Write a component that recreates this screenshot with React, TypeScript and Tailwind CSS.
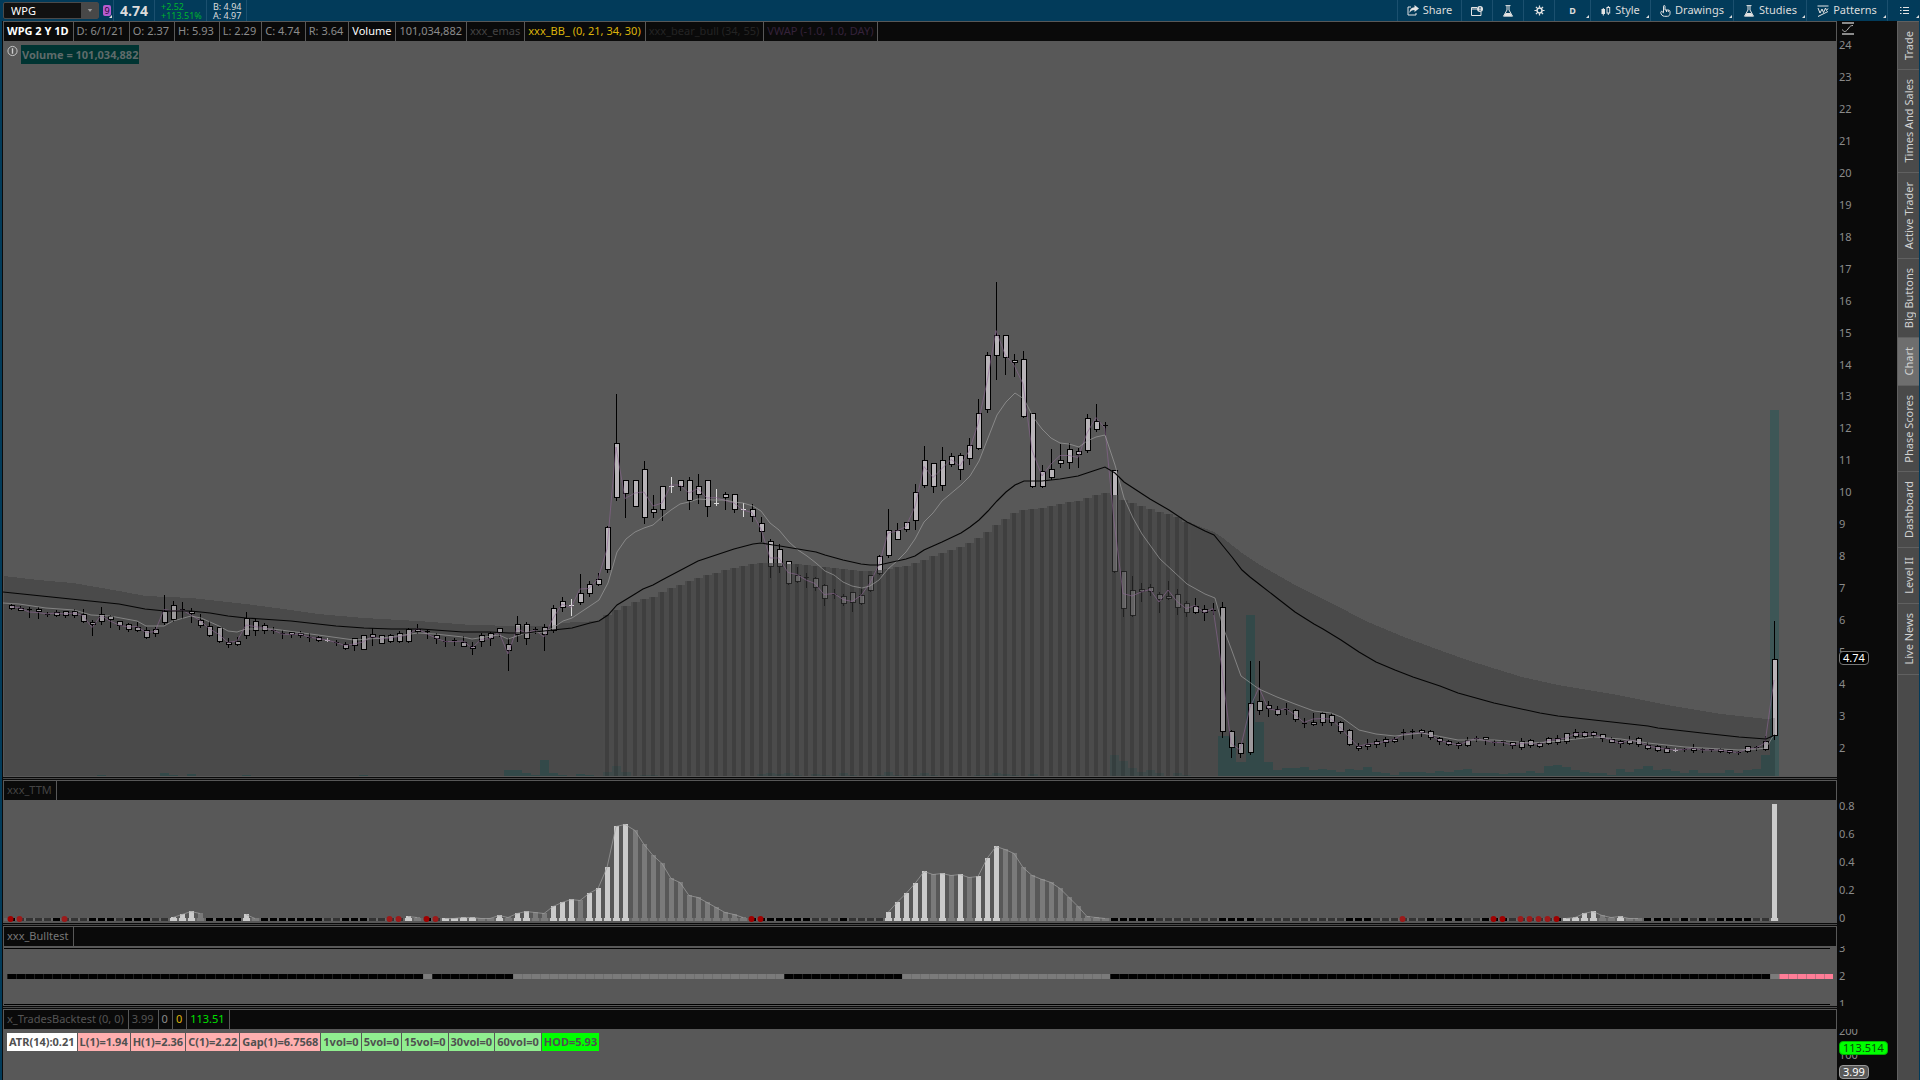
import type { ReactNode } from "react";

// one bar every 9.044px, first bar at x = 11
const barX = (i: number) => 11 + i * 9.044;
const barPx = (i: number) => Math.round(barX(i) - 0.5);
const barLeft = (i: number) => Math.round(barX(i) - 4.5);

// [body top, body bottom, high, low]
const candles: number[][] = [
    [605,608,604,609],[608,610,606,610],[609,610,607,617],[609,611,607,618],[614,615,612,616],[612,615,610,616],
    [611,615,611,617],[611,615,609,617],[614,621,609,622],[622,624,620,635],[614,621,607,624],[616,619,615,627],
    [621,625,621,629],[624,629,623,631],[627,630,622,631],[630,637,627,638],[629,633,627,636],[611,622,595,624],
    [605,619,601,621],[609,610,602,618],[611,613,608,622],[620,625,614,627],[626,635,621,636],[627,641,627,642],
    [642,644,638,647],[641,644,637,645],[618,635,612,638],[621,630,618,635],[625,630,623,633],[630,631,627,633],
    [633,634,630,638],[632,634,632,637],[633,635,631,637],[637,638,633,641],[637,640,636,641],[640,640,638,642],
    [642,643,640,645],[644,648,642,649],[638,645,638,650],[635,649,635,649],[634,637,628,645],[635,643,635,643],
    [635,641,634,642],[633,641,631,642],[629,641,628,642],[629,631,624,633],[631,632,630,638],[635,638,633,643],
    [641,642,637,646],[640,641,638,645],[642,646,636,646],[646,648,642,654],[635,641,633,646],[633,638,632,645],
    [628,632,628,636],[644,650,638,670],[624,634,616,641],[624,638,622,644],[629,630,627,633],[627,634,624,650],
    [608,630,605,632],[601,607,597,611],[605,605,599,616],[593,602,574,604],[584,593,581,596],[579,584,573,585],
    [527,569,526,572],[443,497,394,500],[480,493,480,517],[480,506,480,506],[469,517,461,523],[509,512,495,517],
    [486,509,486,520],[486,486,477,493],[480,486,480,490],[480,500,477,509],[486,494,474,503],[480,506,480,516],
    [503,503,489,506],[494,497,492,509],[494,509,494,512],[509,509,503,517],[509,516,504,521],[523,531,517,541],
    [541,566,539,577],[549,566,544,572],[561,583,561,584],[575,581,567,582],[577,578,573,587],[578,587,577,590],
    [585,598,584,605],[594,595,589,598],[596,603,594,605],[592,602,592,611],[595,603,587,604],[575,590,575,591],
    [556,573,555,574],[530,555,509,557],[530,539,523,539],[522,529,522,531],[492,520,484,529],[460,485,446,487],
    [463,486,463,492],[460,485,447,490],[456,464,453,466],[455,469,453,479],[445,458,438,464],[413,448,399,449],
    [355,409,352,412],[335,355,282,379],[335,357,335,374],[360,362,354,376],[359,416,351,417],[413,486,413,487],
    [471,486,465,487],[469,477,449,479],[460,463,444,467],[449,462,443,468],[451,454,448,467],[418,450,414,452],
    [421,429,404,431],[425,426,422,435],[470,571,470,572],[571,608,571,616],[590,615,576,616],[589,591,583,601],
    [587,591,584,595],[594,599,592,612],[596,598,581,599],[594,607,589,614],[603,612,601,616],[606,612,598,613],
    [609,612,605,620],[610,611,603,614],[607,731,602,737],[731,747,730,757],[743,753,743,757],[703,752,661,754],
    [701,710,661,714],[705,708,701,716],[709,714,706,715],[709,710,703,714],[710,719,709,721],[723,724,718,727],
    [722,724,713,725],[713,722,712,725],[715,722,713,725],[722,731,721,733],[730,744,729,745],[746,748,743,750],
    [744,746,739,749],[741,744,739,747],[739,742,737,746],[739,741,737,742],[732,733,729,739],[731,732,729,738],
    [730,732,729,736],[731,737,730,739],[738,741,737,744],[741,744,740,745],[743,745,742,748],[740,745,737,746],
    [738,739,736,741],[737,739,737,744],[742,743,740,745],[741,742,740,745],[742,745,742,748],[741,747,738,749],
    [740,745,739,747],[743,746,742,747],[738,743,737,744],[738,742,735,744],[733,741,733,743],[732,736,729,738],
    [732,736,731,737],[732,735,731,737],[734,738,734,741],[739,742,737,742],[741,743,740,747],[740,743,736,744],
    [738,744,737,746],[745,748,742,749],[746,750,745,751],[748,752,746,752],[750,750,748,752],[749,750,748,751],
    [748,750,744,752],[749,750,748,752],[749,750,749,751],[749,751,748,752],[750,752,750,753],[752,753,751,754],
    [746,751,746,752],[747,748,746,750],[741,749,736,750],[659,735,621,739],
];

const slowLine = "3,592 119,604 145,609 165,611 191,611 210,613 228,616 246,618 291,621 336,626 364,628 391,629 421,629 463,632 490,632 509,633 526,633 553,630 572,628 590,623 599,621 608,615 617,605 635,594 643,589 653,585 662,580 698,561 734,549 753,544 761,543 773,545 780,546 798,549 816,552 825,555 843,560 861,564 870,565 879,565 906,559 915,556 924,550 942,542 961,533 970,527 979,520 988,511 997,501 1006,492 1015,485 1024,481 1042,481 1060,479 1078,476 1093,471 1105,467 1115,473 1124,482 1150,499 1169,510 1187,522 1205,531 1214,535 1223,546 1232,557 1242,570 1250,577 1259,584 1277,598 1295,612 1314,624 1323,629 1341,640 1359,652 1376,662 1395,670 1413,677 1440,686 1458,693 1494,703 1540,713 1558,716 1648,726 1658,728 1702,733 1739,737 1766,739 1775,735";

const fastLine = "3,603 19,604 46,608 74,610 91,615 110,616 137,621 146,626 164,626 173,621 191,616 201,618 219,626 228,631 237,632 246,629 273,629 318,635 354,640 382,638 418,633 435,634 463,637 472,639 499,635 508,639 526,633 544,632 553,628 563,621 572,618 590,606 599,600 608,583 617,552 626,539 635,532 644,528 653,525 662,517 671,510 680,504 689,502 698,499 713,500 725,500 734,502 743,503 753,506 761,511 770,523 779,530 789,542 798,550 807,556 816,563 825,571 834,575 843,582 852,586 862,588 870,586 879,580 888,569 897,561 906,552 915,539 924,522 933,513 942,501 961,485 970,476 979,461 988,438 997,415 1006,402 1015,393 1024,399 1033,417 1042,429 1051,438 1060,443 1069,444 1079,447 1087,441 1096,437 1105,435 1115,465 1124,498 1133,518 1142,534 1160,559 1187,584 1205,594 1215,598 1223,627 1232,651 1241,676 1259,689 1277,697 1295,704 1314,711 1331,713 1341,717 1359,730 1376,734 1395,736 1422,733 1458,740 1494,740 1531,743 1549,742 1576,739 1594,737 1621,739 1648,743 1685,747 1739,750 1757,749 1766,748 1775,733";

const cloudPoints = [
    [3,576],[38,580],[73,583],[119,591],[146,596],[191,598],[246,604],[291,610],[318,614],[364,618],[418,621],[472,625],
    [517,626],[551,626],[560,623],[599,621],[608,615],[617,610],[626,606],[635,602],[653,597],[671,588],[698,578],
    [725,570],[743,566],[761,563],[780,563],[807,565],[834,568],[852,570],[870,571],[888,569],[906,566],[915,563],
    [924,560],[942,553],[961,547],[979,538],[988,532],[997,525],[1006,519],[1015,513],[1024,510],[1042,508],[1060,504],
    [1078,501],[1096,495],[1106,493],[1115,495],[1124,500],[1151,509],[1178,517],[1187,522],[1214,532],[1223,538],
    [1242,553],[1260,565],[1295,585],[1331,603],[1368,622],[1404,637],[1431,647],[1467,660],[1522,677],[1558,685],
    [1612,694],[1667,705],[1721,714],[1766,719],[1775,718],
];

const cloudY = (x: number) => {
    for (let k = 1; k < cloudPoints.length; k++) {
        const [x0, y0] = cloudPoints[k - 1];
        const [x1, y1] = cloudPoints[k];
        if (x <= x1) return Math.round(y0 + ((y1 - y0) * (x - x0)) / (x1 - x0));
    }
    return cloudPoints[cloudPoints.length - 1][1];
};

const cloudArea = (from: number, to: number) => {
    const inner = cloudPoints.filter(([x]) => x > from && x < to).map((p) => p.join(","));
    return [`${from},776`, `${from},${cloudY(from)}`, ...inner, `${to},${cloudY(to)}`, `${to},776`].join(" ");
};

// the cloud is striped between these two bars
const stripeFrom = 66;
const stripeTo = 130;
const stripes = Array.from({ length: stripeTo - stripeFrom + 1 }, (_, k) => k + stripeFrom);

// bar index -> top of the volume bar
const volumes: Record<number, number> = {
    10: 775, 17: 773, 18: 775, 20: 774, 26: 775, 39: 775, 55: 770, 56: 770, 57: 773, 58: 775, 59: 760, 60: 773, 61: 775,
    63: 774, 64: 775, 66: 772, 67: 766, 68: 772, 70: 775, 71: 775, 83: 774, 84: 773, 85: 774, 86: 773, 87: 775, 89: 774,
    90: 775, 92: 773, 93: 775, 96: 775, 97: 772, 98: 775, 100: 775, 101: 773, 102: 775, 107: 775, 108: 775, 109: 773,
    110: 774, 111: 775, 113: 774, 122: 755, 123: 761, 124: 768, 125: 772, 126: 770, 127: 773, 129: 773, 130: 775,
    134: 736, 135: 736, 136: 762, 137: 615, 138: 722, 139: 762, 140: 770, 141: 768, 142: 768, 143: 767, 144: 770,
    145: 769, 146: 770, 147: 772, 148: 769, 149: 770, 150: 767, 151: 772, 152: 773, 153: 775, 154: 772, 155: 772,
    156: 772, 157: 773, 158: 771, 159: 772, 160: 770, 161: 769, 162: 773, 163: 773, 164: 773, 165: 774, 166: 773,
    167: 773, 168: 771, 169: 773, 170: 766, 171: 765, 172: 767, 173: 770, 174: 772, 175: 773, 176: 773, 177: 775,
    178: 769, 179: 772, 180: 769, 181: 766, 182: 770, 183: 769, 184: 771, 185: 773, 186: 770, 187: 773, 188: 773,
    189: 773, 190: 770, 191: 773, 192: 770, 193: 769, 194: 755, 195: 410,
};

// K black dash, G gray dash, R/r red dot on black/gray, W rising bar, H falling bar
const ttmMarks =
    "RrGGGKrGGKKKGKKKGG" + "WWWH" + "KKKK" + "WH" + "KKKKKKKGGKKKGGrrWHRr" + "WWWWHHWHWWHHWWWHWWWWW" +
    "HHHHHHHHHHHHH" + "RRKKKKKGGGKGGGG" + "WWWWWHWHWHWWW" + "HHHHHHHHHHHH" + "KKKKKGGGGGGG" + "KKKKGGGGGGGGGG" +
    "KKKGGGrGGKGKKGGKRRGrrrrR" + "WWWWHHWHH" + "KKKGKGKGKKKKGG" + "W";

const ttmTops: Record<number, number> = {
    18: 917, 19: 914, 20: 911, 21: 913, 26: 914, 27: 918, 44: 916, 45: 917, 48: 918, 49: 918, 50: 917, 51: 917, 52: 918,
    53: 918, 54: 915, 55: 917, 56: 913, 57: 911, 58: 912, 59: 913, 60: 906, 61: 902, 62: 899, 63: 900, 64: 893, 65: 888,
    66: 867, 67: 826, 68: 824, 69: 830, 70: 844, 71: 855, 72: 863, 73: 878, 74: 882, 75: 895, 76: 897, 77: 902, 78: 907,
    79: 912, 80: 914, 81: 917, 97: 912, 98: 902, 99: 893, 100: 883, 101: 871, 102: 874, 103: 873, 104: 875, 105: 874,
    106: 877, 107: 876, 108: 858, 109: 846, 110: 849, 111: 853, 112: 867, 113: 875, 114: 879, 115: 882, 116: 888,
    117: 897, 118: 906, 119: 916, 120: 917, 121: 918, 172: 918, 173: 917, 174: 913, 175: 911, 176: 915, 177: 917,
    178: 916, 179: 918, 180: 918, 195: 804,
};

const ttmRuns = [[18, 21], [26, 27], [44, 45], [48, 81], [97, 121], [172, 180]];

const markColors: Record<string, string> = { K: "#000", G: "#333", R: "#000", r: "#333", W: "#cbcbcb", H: "#7a7a7a" };

const PriceChart = () => {
    const body = candles.map(([top, bottom, high, low], i) => {
        const p = barPx(i);
        if (top === bottom) {
            return <path key={i} d={`M${p + 0.5} ${high}V${low}M${p - 2} ${top + 0.5}h5`} stroke="#d8d8d8" />;
        }
        return (
            <g key={i} stroke="#000">
                <path d={`M${p + 0.5} ${high}V${low + 1}`} />
                {bottom - top < 2
                    ? <rect x={p - 2} y={top} width="5" height="1" fill="#000" stroke="none" />
                    : <rect x={p - 1.5} y={top + 0.5} width="5" height={bottom - top} fill="#b8b4b8" />}
            </g>
        );
    });
    const midLine = candles.map(([, , high, low], i) => `${barPx(i)},${(high + low) / 2}`).join(" ");

    return (
        <svg viewBox="3 41 1834 736" preserveAspectRatio="none" className="block h-full w-full">
            <g shapeRendering="crispEdges">
                {Object.entries(volumes).map(([i, top]) => (
                    <rect key={i} x={barLeft(+i)} y={top} width={barLeft(+i + 1) - barLeft(+i)} height={776 - top} fill="#005252" fillOpacity="0.3" />
                ))}
                {body}
                <polygon points={cloudArea(4, barLeft(stripeFrom))} fill="#000" fillOpacity="0.15" />
                <polygon points={cloudArea(barLeft(stripeTo + 1), 1775)} fill="#000" fillOpacity="0.15" />
                {stripes.map((i) => {
                    const x = barLeft(i);
                    const y = cloudY(barX(i));
                    const width = barLeft(i + 1) - x;
                    return (
                        <g key={i}>
                            <rect x={x} y={y} width={width} height={776 - y} fill="#000" fillOpacity="0.15" />
                            <rect x={x} y={y} width={width} height={776 - y} fill="#4b4b4b" fillOpacity="0.5" />
                            <rect x={barPx(i) - 2} y={y} width="4" height={776 - y} fill="#000" fillOpacity="0.15" />
                        </g>
                    );
                })}
            </g>
            <polyline points={midLine} fill="none" stroke="#8d6594" strokeOpacity="0.6" />
            <polyline points={fastLine} fill="none" stroke="#a9a9a9" strokeOpacity="0.6" />
            <polyline points={slowLine} fill="none" stroke="#050505" strokeWidth="1.100" />
        </svg>
    );
};

const TtmChart = () => (
    <svg viewBox="3 800 1834 123" preserveAspectRatio="none" className="block h-full w-full">
        <g shapeRendering="crispEdges">
            <rect x="4" y="918" width="1775" height="3" fill="#666" />
            {ttmMarks.split("").map((mark, i) => (
                <g key={i} fill={markColors[mark]}>
                    <rect x={barPx(i) - 3} y="918" width="7" height="3" />
                    {ttmTops[i] && <rect x={barPx(i) - 2} y={ttmTops[i]} width="5" height={921 - ttmTops[i]} />}
                </g>
            ))}
        </g>
        {ttmMarks.split("").map((mark, i) => mark.toLowerCase() === "r" && (
            <circle key={i} cx={barPx(i) - 0.5} cy="919" r="3" fill={mark === "R" ? "#a00000" : "#9c1a1a"} />
        ))}
        {ttmRuns.map(([from, to]) => {
            const points = [];
            for (let i = from; i <= to; i++) points.push(`${barPx(i)},${ttmTops[i] + 0.5}`);
            return <polyline key={from} points={points.join(" ")} fill="none" stroke="#a0a0a0" strokeOpacity="0.7" />;
        })}
    </svg>
);

const bullColor = (i: number) => {
    if (i > 195) return "#ff7d97";
    if (i === 46 || i === 195 || (i >= 56 && i <= 85) || (i >= 99 && i <= 121)) return "#7b7b7b";
    return "#000";
};

const BullChart = () => (
    <svg viewBox="3 946 1834 60" preserveAspectRatio="none" className="block h-full w-full" shapeRendering="crispEdges">
        <path d="M4 948.5H1830M4 1004.5H1830" stroke="#000" />
        {Array.from({ length: 202 }, (_, i) => (
            <g key={i}>
                <rect x={barLeft(i)} y="974" width={barLeft(i + 1) - barLeft(i)} height="5" fill={bullColor(i)} />
                <rect x={barLeft(i)} y="974" width="1" height="5" fill="#585858" fillOpacity="0.35" />
            </g>
        ))}
    </svg>
);

type Cell = { text: string; className: string; pad?: string };

const priceCells: Cell[] = [
    { text: "WPG 2 Y 1D", className: "font-bold text-white" },
    { text: "D: 6/1/21", className: "text-[#8c8c8c]", pad: "pr-[5px]" },
    { text: "O: 2.37", className: "text-[#8c8c8c]", pad: "pr-[5px]" },
    { text: "H: 5.93", className: "text-[#8c8c8c]", pad: "pr-[5px]" },
    { text: "L: 2.29", className: "text-[#8c8c8c]", pad: "pr-[5px]" },
    { text: "C: 4.74", className: "text-[#8c8c8c]", pad: "pr-[5px]" },
    { text: "R: 3.64", className: "text-[#8c8c8c]", pad: "pr-[5px]" },
    { text: "Volume", className: "text-white" },
    { text: "101,034,882", className: "text-[#8c8c8c]" },
    { text: "xxx_emas", className: "text-[#444444]" },
    { text: "xxx_BB_ (0, 21, 34, 30)", className: "text-[#dcb40a]" },
    { text: "xxx_bear_bull (34, 55)", className: "text-[#242424]" },
    { text: "VWAP (-1.0, 1.0, DAY)", className: "text-[#35223a]" },
];

const backtestCells: Cell[] = [
    { text: "x_TradesBacktest (0, 0)", className: "text-[#555555]" },
    { text: "3.99", className: "text-[#555555]" },
    { text: "0", className: "text-[#8c8c8c]" },
    { text: "0", className: "text-[#dcb40a]" },
    { text: "113.51", className: "text-[#00e000]" },
];

const backtestLabels: Cell[] = [
    { text: "ATR(14):0.21", className: "bg-white" },
    { text: "L(1)=1.94", className: "bg-[#ffafaf]" },
    { text: "H(1)=2.36", className: "bg-[#ffafaf]" },
    { text: "C(1)=2.22", className: "bg-[#ffafaf]" },
    { text: "Gap(1)=6.7568", className: "bg-[#ffafaf]" },
    { text: "1vol=0", className: "bg-[#90ee90]" },
    { text: "5vol=0", className: "bg-[#90ee90]" },
    { text: "15vol=0", className: "bg-[#90ee90]" },
    { text: "30vol=0", className: "bg-[#90ee90]" },
    { text: "60vol=0", className: "bg-[#90ee90]" },
    { text: "HOD=5.93", className: "bg-[#00ff00]" },
];

const StudyHeader = ({ cells }: { cells: Cell[] }) => (
    <div className="flex h-5 shrink-0 border-x border-t border-[#585858] bg-[#0a0a0a] leading-[18px]">
        {cells.map((cell, i) => (
            <div key={i} className={`border-r border-[#585858] pl-[3px] whitespace-nowrap ${cell.pad ?? "pr-1"} ${cell.className}`}>{cell.text}</div>
        ))}
    </div>
);

const Divider = () => (
    <div className="flex h-[3px] shrink-0 flex-col justify-center bg-[#0a0a0a] pr-[60px]">
        <div className="h-px bg-[#484848]" />
    </div>
);

const Panel = ({ className, cells, children, axis }: { className: string; cells: Cell[]; children: ReactNode; axis: ReactNode }) => (
    <section className={`flex ${className}`}>
        <div className="flex min-w-0 flex-1 flex-col bg-[#585858]">
            <StudyHeader cells={cells} />
            <div className="relative min-h-0 flex-1">{children}</div>
        </div>
        <div className="relative w-[60px] shrink-0 overflow-hidden bg-[#0a0a0a] text-[#8a8a8a]">{axis}</div>
    </section>
);

const Corner = () => (
    <svg viewBox="0 0 4 4" className="absolute right-px bottom-[3px] h-[3px] w-[3px]"><path d="M4 0V4H0Z" fill="#ddd" /></svg>
);

const ToolButton = ({ width, icon, label, name, menu }: { width: string; icon: ReactNode; label?: string; name?: string; menu?: boolean }) => (
    <button aria-label={name} className={`relative flex h-full items-center justify-center gap-1 border-l border-[#1b506f] whitespace-nowrap ${width}`}>
        {icon}
        {label}
        {menu && <Corner />}
    </button>
);

const Flask = () => (
    <svg viewBox="0 0 12 12" className="h-3 w-3 shrink-0" fill="none" stroke="#e4e4e4">
        <path d="M3.5 .6H8.5M5 1V5L1.5 11.2H10.5L7 5V1" />
        <path d="M3.6 8H8.4L10 11H2Z" fill="#e4e4e4" stroke="none" />
    </svg>
);

const TopBar = () => (
    <header className="flex h-[21px] shrink-0 items-center bg-[#023b5a] text-[#dcdcdc]">
        <div className="ml-[3px] flex h-[17px] w-24 items-center rounded-xs border border-[#4a4a4a] bg-[#111111]">
            <input aria-label="Symbol" defaultValue="WPG" className="h-full w-0 flex-1 bg-transparent pl-[7px] text-white outline-none" />
            <button aria-label="Symbol list" className="flex h-full w-[17px] items-center justify-center bg-[#484848]">
                <svg viewBox="0 0 6 4" className="h-[3px] w-[6px]"><path d="M0 0H6L3 4Z" fill="#999" /></svg>
            </button>
        </div>
        <button aria-label="Link color" className="relative flex h-full w-[14px] items-center pl-1">
            <span className="flex h-[11px] w-2 items-center justify-center rounded-xs bg-[#b65bd0] text-[9px] text-[#2a0838]">9</span>
            <Corner />
        </button>
        <div className="flex h-full w-[41px] items-center border-l border-[#1b506f] pl-1.5 text-[14px] font-bold">4.74</div>
        <div className="flex h-full w-[52px] flex-col justify-center border-l border-[#1b506f] pl-1.5 text-[9px] leading-[9px] text-[#00b42d]">
            <span>+2.52</span>
            <span>+113.51%</span>
        </div>
        <div className="flex h-full w-[41px] flex-col justify-center border-x border-[#1b506f] pl-1.5 text-[9px] leading-[9px] whitespace-nowrap">
            <span>B: 4.94</span>
            <span>A: 4.97</span>
        </div>
        <nav className="ml-auto flex h-full">
            <ToolButton width="w-16" label="Share" icon={
                <svg viewBox="0 0 12 11" className="h-[11px] w-3 shrink-0">
                    <path d="M4 2H1V10H9V8" fill="none" stroke="#e4e4e4" />
                    <path d="M7.5 0L12 3.5L7.5 7V5C5 5 3.5 6 2.5 8C2.5 4.500 4.500 2.300 7.500 2.200Z" fill="#e4e4e4" />
                </svg>
            } />
            <ToolButton width="w-[31px]" name="Notes" icon={
                <svg viewBox="0 0 12 10" className="h-[10px] w-3" fill="none" stroke="#e4e4e4">
                    <path d="M6 1.500H.5V9.500H10V6M.5 3H6" />
                    <circle cx="9" cy="3" r="3" fill="#e4e4e4" stroke="none" />
                    <path d="M9 1V3.500M9 4V5" stroke="#023b5a" />
                </svg>
            } />
            <ToolButton width="w-[31px]" name="Edit studies" icon={<Flask />} />
            <ToolButton width="w-[31px]" name="Settings" icon={
                <svg viewBox="0 0 12 12" className="h-[11px] w-[11px]" fill="none" stroke="#e4e4e4">
                    <circle cx="6" cy="6" r="2.700" strokeWidth="1.700" />
                    <path d="M6 .5V3M6 9V11.500M.5 6H3M9 6H11.500M2.100 2.100L4 4M8 8L9.900 9.900M9.900 2.100L8 4M4 8L2.100 9.900" strokeWidth="1.300" />
                </svg>
            } />
            <ToolButton width="w-[36px]" name="Time frame" menu icon={<span className="text-[9px] font-bold">D</span>} />
            <ToolButton width="w-[60px]" label="Style" menu icon={
                <svg viewBox="0 0 10 10" className="h-[10px] w-[10px] shrink-0" stroke="#e4e4e4" fill="none">
                    <rect x="1" y="3.500" width="2.500" height="4" fill="#e4e4e4" />
                    <path d="M2.300 2V9.500M7.300 0V1.500M7.300 7V9" />
                    <rect x="6" y="1.500" width="2.700" height="5.500" />
                </svg>
            } />
            <ToolButton width="w-[83px]" label="Drawings" menu icon={
                <svg viewBox="0 0 11 12" className="h-3 w-[11px] shrink-0" stroke="#e4e4e4" fill="none">
                    <path d="M3.500 7.500V1.200C3.500 .3 5 .3 5 1.200V5H8C9.500 5 10 5.700 10 6.800V8.500C10 10 9 11.300 7.500 11.300H4.500C2.500 11.300 .8 9.500 .8 7.500C.8 6 2.200 6 2.700 7L3.500 8.200M6.500 5V7M8.300 5.300V7" />
                </svg>
            } />
            <ToolButton width="w-[73px]" label="Studies" menu icon={<Flask />} />
            <ToolButton width="w-[81px]" label="Patterns" menu icon={
                <svg viewBox="0 0 12 12" className="h-3 w-3 shrink-0" stroke="#e4e4e4" fill="none">
                    <path d="M.5 1H11.500M1 11.500L11 6.500M1 3L3 8L5 4L6.500 7.500L8.500 3L9.500 5.500L11 3.500" />
                </svg>
            } />
            <ToolButton width="w-[33px]" name="Menu" menu icon={
                <svg viewBox="0 0 9 8" className="h-2 w-[9px]" stroke="#e4e4e4"><path d="M0 .5H1.500M3 .5H9M0 3.500H1.500M3 3.500H9M0 6.500H1.500M3 6.500H9" /></svg>
            } />
        </nav>
    </header>
);

const tabs = ["Trade", "Times And Sales", "Active Trader", "Big Buttons", "Chart", "Phase Scores", "Dashboard", "Level II", "Live News"];

const SideTabs = () => (
    <aside className="flex w-[22px] shrink-0 flex-col border-t border-l border-[#606060] bg-[#4a4a4a]">
        {tabs.map((tab) => (
            <button key={tab} className={`flex items-center justify-center border-b border-[#606060] py-[9px] ${tab === "Chart" ? "bg-[#6e6e6e]" : ""}`}>
                <span className="rotate-180 leading-5 whitespace-nowrap text-[#d2d2d2] [writing-mode:vertical-rl]">{tab}</span>
            </button>
        ))}
    </aside>
);

const prices = Array.from({ length: 23 }, (_, i) => 24 - i);

const App = () => {
    return (
        <div className="flex h-screen flex-col overflow-hidden bg-[#0a0a0a] text-[11px] [font-family:'Noto_Sans','Open_Sans',sans-serif]">
            <TopBar />
            <div className="flex min-h-0 flex-1 border-r border-l-2 border-[#023b5a]">
                <main className="flex min-w-0 flex-1 flex-col pl-px">
                    <Panel className="min-h-0 flex-1" cells={priceCells} axis={
                        <>
                            <svg viewBox="0 0 12 13" className="absolute top-px left-[5px] h-[13px] w-3" fill="none" stroke="#b5b5b5">
                                <path d="M0 1H12M0 12H12" strokeWidth="1.600" />
                                <path d="M.5 7.500C1.500 10.500 4 10 6 7S9 3.500 11 3.500" />
                            </svg>
                            <div className="flex h-full flex-col pt-2 pb-[13px] pl-0.5">
                                {prices.map((price) => (
                                    <span key={price} className="flex min-h-0 flex-1 items-center leading-4">{price}</span>
                                ))}
                            </div>
                            <span className="absolute top-[83.3%] left-0.5 rounded border border-[#777777] bg-black px-[3px] leading-3 text-white">4.74</span>
                        </>
                    }>
                        <PriceChart />
                        <div className="absolute top-1 left-1 flex gap-[3px]">
                            <svg viewBox="0 0 12 12" className="h-3 w-[11px]" fill="none" stroke="#cfcfcf">
                                <circle cx="6" cy="6" r="5" />
                                <path d="M6 3V9" strokeWidth="1.500" />
                            </svg>
                            <span className="bg-[#003432] px-px leading-[19px] font-bold text-[#5f6b6a]">Volume = 101,034,882</span>
                        </div>
                    </Panel>
                    <Divider />
                    <Panel className="h-[143px] shrink-0" cells={[{ text: "xxx_TTM", className: "text-[#444444]" }]} axis={
                        <div className="flex flex-col pt-3 pl-0.5 leading-7">
                            {["0.8", "0.6", "0.4", "0.2", "0"].map((value) => <span key={value}>{value}</span>)}
                        </div>
                    }>
                        <TtmChart />
                    </Panel>
                    <Divider />
                    <Panel className="h-20 shrink-0" cells={[{ text: "xxx_Bulltest", className: "text-[#777777]", pad: "pr-[5px]" }]} axis={
                        <div className="mt-5 h-[60px] overflow-hidden pl-0.5">
                            <div className="-mt-3 flex flex-col leading-7">
                                {["3", "2", "1"].map((value) => <span key={value}>{value}</span>)}
                            </div>
                        </div>
                    }>
                        <BullChart />
                    </Panel>
                    <Divider />
                    <Panel className="h-[71px] shrink-0" cells={backtestCells} axis={
                        <>
                            <div className="mt-5 overflow-hidden pl-0.5">
                                <div className="-mt-2.5 flex flex-col leading-6">
                                    <span>200</span>
                                    <span>100</span>
                                </div>
                            </div>
                            <span className="absolute top-8 left-0.5 rounded border border-[#00b400] bg-[#00ff00] px-[3px] leading-3 text-[#0a4a0a]">113.514</span>
                            <span className="absolute top-14 left-0.5 rounded border border-[#999999] bg-[#585858] px-[3px] leading-3 text-white">3.99</span>
                        </>
                    }>
                        <div className="flex gap-px pt-1 pl-1 font-bold text-[#505050]">
                            {backtestLabels.map((label) => (
                                <span key={label.text} className={`px-0.5 leading-[18px] whitespace-nowrap ${label.className}`}>{label.text}</span>
                            ))}
                        </div>
                    </Panel>
                </main>
                <SideTabs />
            </div>
        </div>
    );
};

export default App;
